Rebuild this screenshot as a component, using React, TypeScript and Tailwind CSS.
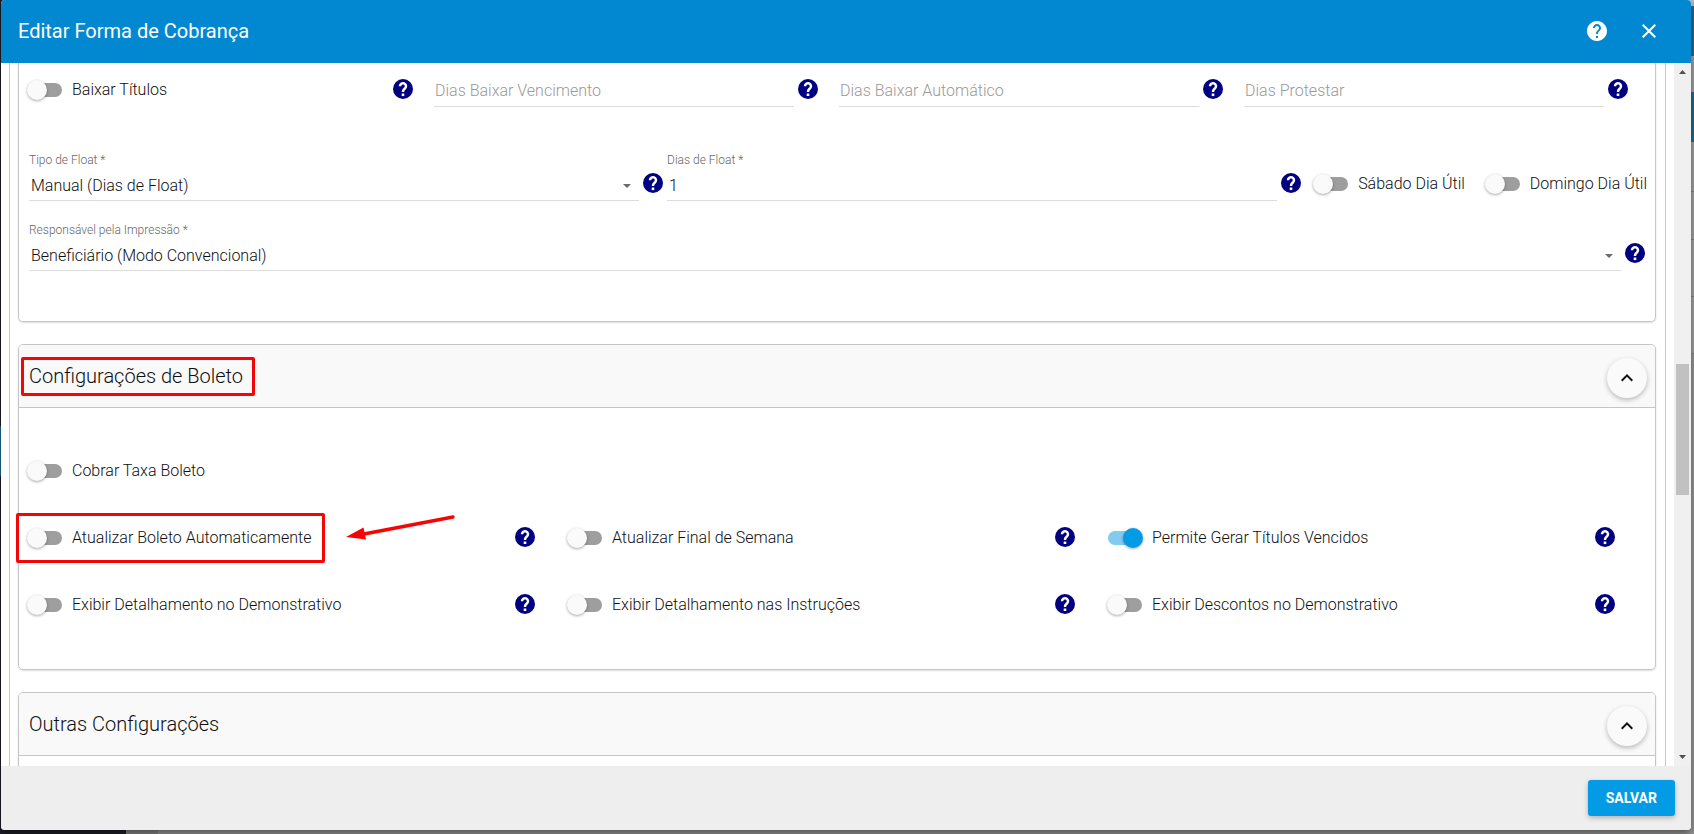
import { useId, type ReactNode } from "react";
import { MdClose, MdHelp, MdKeyboardArrowUp } from "react-icons/md";

function Help({ topic }: { topic: string }) {
  return (
    <button type="button" aria-label={`Ajuda: ${topic}`} className="size-6 shrink-0 rounded-full">
      <svg viewBox="0 0 24 24" className="size-6" fill="none" aria-hidden="true">
        <circle cx="12" cy="12" r="10" fill="#000080" />
        <path
          d="M9 9.200a3 3 0 1 1 5.200 2l-1.250 1.270c-.6.6-.95 1.200-.95 2.530"
          stroke="#fff"
          strokeWidth="2.500"
        />
        <path d="M10.700 16.500h2.600v2.600h-2.600z" fill="#fff" />
      </svg>
    </button>
  );
}

function Toggle({ label, on = false }: { label: string; on?: boolean }) {
  return (
    <label className="-ml-px flex h-[26px] items-center gap-2.5 whitespace-nowrap">
      <input
        type="checkbox"
        defaultChecked={on}
        className="relative h-3.5 w-[34px] shrink-0 appearance-none rounded-full bg-[#9e9e9e] before:absolute before:-top-[3px] before:-left-px before:size-5 before:rounded-full before:bg-[#fafafa] before:shadow-[0_1px_3px_rgba(0,0,0,0.35)] before:content-[''] checked:bg-[#81cbf1] checked:before:left-[15px] checked:before:bg-[#039be5]"
      />
      {label}
    </label>
  );
}

function ToggleCell({ label, on }: { label: string; on?: boolean }) {
  return (
    <div className="flex h-[30px] items-start justify-between pr-8">
      <Toggle label={label} on={on} />
      <Help topic={label} />
    </div>
  );
}

function PlainField({ label }: { label: string }) {
  return (
    <div className="flex items-start gap-0.5 pr-[19px]">
      <input
        type="text"
        aria-label={label}
        placeholder={label}
        className="h-[30px] w-full min-w-0 border-b border-[#dcdcdc] px-px pb-0.5 outline-none placeholder:text-[#999999]"
      />
      <Help topic={label} />
    </div>
  );
}

function FieldLabel({ id, children }: { id: string; children: ReactNode }) {
  return (
    <label htmlFor={id} className="mb-[3px] h-4 text-xs leading-4 text-[#666666]">
      {children}
    </label>
  );
}

function SelectField({ label, value }: { label: string; value: string }) {
  const id = useId();
  return (
    <div className="flex min-w-0 flex-1 items-end gap-0.5">
      <div className="flex min-w-0 flex-1 flex-col">
        <FieldLabel id={id}>{label} *</FieldLabel>
        <div className="flex items-center border-b border-[#dcdcdc] pr-2">
          <select id={id} className="h-[29px] min-w-0 flex-1 appearance-none pl-0.5 outline-none">
            <option>{value}</option>
          </select>
          <svg viewBox="0 0 8 4" className="h-1 w-2 fill-[#6b6b6b]" aria-hidden="true">
            <path d="M0 0h8L4 4z" />
          </svg>
        </div>
      </div>
      <div className="h-[30px]">
        <Help topic={label} />
      </div>
    </div>
  );
}

function TextField({ label, value }: { label: string; value: string }) {
  const id = useId();
  return (
    <div className="flex min-w-0 flex-1 items-end gap-0.5">
      <div className="flex min-w-0 flex-1 flex-col">
        <FieldLabel id={id}>{label} *</FieldLabel>
        <input
          id={id}
          type="text"
          defaultValue={value}
          className="h-[30px] w-full border-b border-[#dcdcdc] px-0.5 outline-none"
        />
      </div>
      <div className="h-[30px]">
        <Help topic={label} />
      </div>
    </div>
  );
}

function Highlight({ className }: { className: string }) {
  return (
    <div
      aria-hidden="true"
      className={`pointer-events-none absolute rounded-xs border-[3px] border-[#f50505] ${className}`}
    />
  );
}

function Section({ title, marked = false, children }: { title: string; marked?: boolean; children?: ReactNode }) {
  return (
    <section className="rounded-[5px] border border-[#c6c6c6] shadow-[0_1px_2px_rgba(0,0,0,0.14)]">
      <header className="flex h-[63px] items-center justify-between rounded-t-[4px] border-b border-[#c6c6c6] bg-[#f9f9f9] pr-2 pl-2.5">
        <h2 className="relative text-xl leading-7">
          {title}
          {marked && <Highlight className="-top-[5px] -right-3 -bottom-[6px] -left-2" />}
        </h2>
        <button
          type="button"
          aria-label={`Recolher ${title}`}
          className="mt-1 flex size-10 items-center justify-center rounded-full bg-[#fafafa] shadow-[0_2px_5px_rgba(0,0,0,0.26)]"
        >
          <MdKeyboardArrowUp className="size-6" />
        </button>
      </header>
      {children}
    </section>
  );
}

function Backdrop() {
  return (
    <div aria-hidden="true" className="absolute inset-0 flex bg-[#979797]">
      <div className="w-[126px] bg-[#1c1c26] pt-[426px]">
        <div className="h-[50px] bg-[#1b6a8e]" />
      </div>
      <div className="w-8 bg-[#868686]" />
      <div className="flex flex-1 flex-col">
        <div className="h-1.5 bg-[#b4b9bd]" />
        <div className="h-[50px] bg-[#276b8c]" />
        <div className="h-9 bg-[#a3a3a3]" />
        <div className="h-[50px] bg-[#1c6f96]" />
        <div className="h-[50px] border-b border-[#858585] bg-[#a3a3a3]" />
        <div className="h-12 border-b border-[#858585] bg-[#a3a3a3]" />
        <div className="h-[57px] border-b border-[#858585] bg-[#a3a3a3]" />
        <div className="h-[57px] border-b border-[#858585] bg-[#a3a3a3]" />
      </div>
    </div>
  );
}

export default function App() {
  return (
    <div className="relative flex h-screen overflow-hidden font-[Roboto,sans-serif] text-base leading-6 font-light text-[#0f0f0f]">
      <Backdrop />
      <div
        role="dialog"
        aria-labelledby="dialog-title"
        className="relative mr-[3px] mb-1 ml-px flex min-w-0 flex-1 flex-col overflow-hidden rounded-[4px] bg-white shadow-[0_4px_8px_rgba(0,0,0,0.45)]"
      >
        <header className="flex h-[63px] shrink-0 items-center bg-[#0288d1] pr-[30px] pb-px pl-[17px] text-white">
          <h1 id="dialog-title" className="flex-1 text-xl leading-7 font-normal">
            Editar Forma de Cobrança
          </h1>
          <div className="flex gap-7">
            <button type="button" aria-label="Ajuda" className="size-6">
              <MdHelp className="size-6" />
            </button>
            <button type="button" aria-label="Fechar" className="size-6">
              <MdClose className="size-6" />
            </button>
          </div>
        </header>

        <div className="flex min-h-0 flex-1">
          <main className="mx-2 flex min-w-0 flex-1 flex-col gap-[22px] overflow-hidden border-x border-[#c6c6c6] pr-[9px] pl-2">
            <section className="shrink-0 rounded-b-[5px] border border-t-0 border-[#c6c6c6] pt-3.5 pr-1.5 pb-[50px] pl-2.5 shadow-[0_1px_2px_rgba(0,0,0,0.14)]">
              <div className="grid grid-cols-4">
                <div className="flex items-start justify-between pr-[19px]">
                  <Toggle label="Baixar Títulos" />
                  <Help topic="Baixar Títulos" />
                </div>
                <PlainField label="Dias Baixar Vencimento" />
                <PlainField label="Dias Baixar Automático" />
                <PlainField label="Dias Protestar" />
              </div>
              <div className="mt-[45px] flex items-end gap-0.5 pr-0.5">
                <SelectField label="Tipo de Float" value="Manual (Dias de Float)" />
                <TextField label="Dias de Float" value="1" />
                <div className="ml-2.5 flex h-[30px] gap-[22px]">
                  <Toggle label="Sábado Dia Útil" />
                  <Toggle label="Domingo Dia Útil" />
                </div>
              </div>
              <div className="mt-[21px] flex pr-0.5">
                <SelectField label="Responsável pela Impressão" value="Beneficiário (Modo Convencional)" />
              </div>
            </section>

            <Section title="Configurações de Boleto" marked>
              <div className="grid grid-cols-3 gap-y-[37px] pt-[50px] pr-1.5 pb-[47px] pl-2.5">
                <div className="col-span-3 h-[30px]">
                  <Toggle label="Cobrar Taxa Boleto" />
                </div>
                <div className="relative">
                  <ToggleCell label="Atualizar Boleto Automaticamente" />
                  <Highlight className="-top-3 -left-[13px] h-[50px] w-[309px]" />
                  <svg
                    viewBox="0 0 110 28"
                    className="pointer-events-none absolute -top-2.5 left-[317px] h-7 w-[110px]"
                    aria-hidden="true"
                  >
                    <path d="M107 2 18 19" stroke="#f50505" strokeWidth="3.4" strokeLinecap="round" />
                    <path d="M0 22 17.500 12.500 20 24.500z" fill="#f50505" />
                  </svg>
                </div>
                <ToggleCell label="Atualizar Final de Semana" />
                <ToggleCell label="Permite Gerar Títulos Vencidos" on />
                <ToggleCell label="Exibir Detalhamento no Demonstrativo" />
                <ToggleCell label="Exibir Detalhamento nas Instruções" />
                <ToggleCell label="Exibir Descontos no Demonstrativo" />
              </div>
            </Section>

            <Section title="Outras Configurações">
              <div className="h-40" />
            </Section>
          </main>

          <div aria-hidden="true" className="flex w-[17px] shrink-0 flex-col items-center bg-[#f0f0f0] py-[7px]">
            <svg viewBox="0 0 7 4" className="h-1 w-[7px] shrink-0 fill-[#505050]">
              <path d="M0 4h7L3.500 0z" />
            </svg>
            <div className="flex w-[13px] flex-1 flex-col">
              <div className="basis-[290px]" />
              <div className="h-[131px] bg-[#c1c1c1]" />
            </div>
            <svg viewBox="0 0 7 4" className="h-1 w-[7px] shrink-0 fill-[#505050]">
              <path d="M0 0h7L3.500 4z" />
            </svg>
          </div>
        </div>

        <footer className="flex h-16 shrink-0 items-center justify-end bg-[#eeeeee] pr-4">
          <button
            type="button"
            className="h-9 rounded-[3px] bg-[#039be5] px-[18px] pb-px text-sm font-bold text-white shadow-[0_2px_5px_rgba(0,0,0,0.26)]"
          >
            SALVAR
          </button>
        </footer>
      </div>
    </div>
  );
}
